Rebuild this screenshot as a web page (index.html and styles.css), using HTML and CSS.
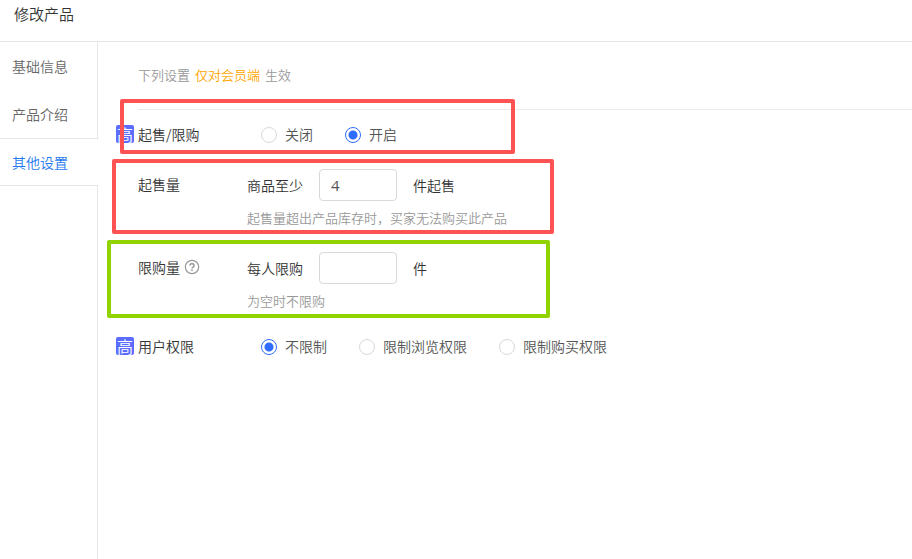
FILE: index.html
```html
<!DOCTYPE html>
<html lang="zh-CN">
<head>
    <meta charset="UTF-8">
    <meta name="viewport" content="width=device-width, initial-scale=1.0">
    <title>修改产品</title>
    <link rel="stylesheet" href="styles.css">
</head>
<body>
    <header class="page-header">
        <h1>修改产品</h1>
    </header>

    <div class="layout">
        <nav class="side-nav">
            <a href="#base">基础信息</a>
            <a href="#intro">产品介绍</a>
            <a href="#other" class="active">其他设置</a>
            <div class="side-rest"></div>
        </nav>

        <main class="content">
            <p class="tip">
                <span>下列设置</span>
                <strong>仅对会员端</strong>
                <span>生效</span>
            </p>

            <form class="settings">
                <div class="row radio-row" role="radiogroup" aria-labelledby="limitLabel">
                    <span class="badge">高</span>
                    <span class="label" id="limitLabel">起售/限购</span>
                    <div class="radios">
                        <label><input type="radio" name="limit" value="0">关闭</label>
                        <label><input type="radio" name="limit" value="1" checked>开启</label>
                    </div>
                    <div class="mark mark-switch"></div>
                </div>

                <div class="row field-row">
                    <label class="label" for="minCount">起售量</label>
                    <div class="field">
                        <div class="field-line">
                            <span>商品至少</span>
                            <input type="text" id="minCount" value="4">
                            <span>件起售</span>
                        </div>
                        <p class="hint">起售量超出产品库存时，买家无法购买此产品</p>
                    </div>
                    <div class="mark mark-min"></div>
                </div>

                <div class="row field-row">
                    <div class="label">
                        <label for="maxCount">限购量</label>
                        <button type="button" class="help" aria-label="限购量说明">
                            <svg width="16" height="16" viewBox="0 0 16 16" fill="none" stroke="#999">
                                <circle cx="8" cy="8" r="6.7" stroke-width="1.2"/>
                                <path d="M6 6.6a2 1.9 0 1 1 3.1 1.5C8.4 8.6 8 8.9 8 9.6" stroke-width="1.6"/>
                                <path d="M8 10.4v1.6" stroke-width="1.7"/>
                            </svg>
                        </button>
                    </div>
                    <div class="field">
                        <div class="field-line">
                            <span>每人限购</span>
                            <input type="text" id="maxCount" value="">
                            <span>件</span>
                        </div>
                        <p class="hint">为空时不限购</p>
                    </div>
                    <div class="mark mark-max"></div>
                </div>

                <div class="row radio-row" role="radiogroup" aria-labelledby="authLabel">
                    <span class="badge">高</span>
                    <span class="label" id="authLabel">用户权限</span>
                    <div class="radios">
                        <label><input type="radio" name="auth" value="0" checked>不限制</label>
                        <label><input type="radio" name="auth" value="1">限制浏览权限</label>
                        <label><input type="radio" name="auth" value="2">限制购买权限</label>
                    </div>
                </div>
            </form>
        </main>
    </div>
</body>
</html>
```
FILE: styles.css
```css
* {
    box-sizing: border-box;
}
body {
    margin: 0;
    min-height: 100vh;
    display: flex;
    flex-direction: column;
    background: #fff;
    color: #333;
    font-family: "Noto Sans CJK SC", sans-serif;
    font-size: 14px;
    font-weight: 350;
    line-height: 20px;
}
h1, p {
    margin: 0;
    font-weight: inherit;
}
input, button {
    font-family: inherit;
}
.page-header {
    padding: 4px 14px 17px;
    border-bottom: 1px solid #e6e6e6;
}
.page-header h1 {
    font-size: 15px;
    line-height: 20px;
}
.layout {
    flex: 1;
    display: flex;
}

/* left menu */
.side-nav {
    flex: 0 0 98px;
    display: flex;
    flex-direction: column;
}
.side-nav a {
    padding: 14px 12px;
    border-right: 1px solid #e6e6e6;
    color: #666;
    text-decoration: none;
}
.side-nav a.active {
    padding: 13px 12px;
    border-top: 1px solid #e6e6e6;
    border-bottom: 1px solid #e6e6e6;
    border-right: 0;
    color: #1f78f0;
}
.side-rest {
    flex: 1;
    border-right: 1px solid #e6e6e6;
}

.content {
    flex: 1;
    padding-left: 40px;
}
.tip {
    display: flex;
    gap: 5px;
    padding: 23px 0 24px;
    border-bottom: 1px solid #ebebeb;
    color: #999;
    font-size: 13px;
}
.tip strong {
    color: #ffa500;
    font-weight: inherit;
}

/* form rows */
.settings {
    display: flex;
    flex-direction: column;
    gap: 24px;
    padding-top: 13px;
}
.row {
    position: relative;
    display: flex;
    align-items: center;
}
.radio-row {
    margin: 1px 0;
}
.badge {
    width: 18px;
    height: 18px;
    margin-left: -22px;
    margin-right: 4px;
    border-radius: 2px;
    background: #5b6cff;
    color: #fff;
    font-size: 16px;
    line-height: 18px;
    text-align: center;
}
.label {
    display: flex;
    align-items: center;
    gap: 4px;
    flex: 0 0 109px;
}
.radios {
    display: flex;
    gap: 32px;
    padding-left: 14px;
}
.radios label {
    display: flex;
    align-items: center;
    gap: 8px;
    color: #555;
}
.radios input {
    appearance: none;
    width: 16px;
    height: 16px;
    margin: 2px 0 0;
    border: 1px solid #d9d9d9;
    border-radius: 50%;
}
.radios input:checked {
    border-color: #2e6dff;
    background: radial-gradient(circle, #2e6dff 4px, #fff 5px);
}
.field-row {
    align-items: flex-start;
}
.field-row .label {
    height: 30px;
}
.field-line {
    display: flex;
    align-items: center;
    gap: 16px;
}
.field-line input {
    width: 78px;
    height: 32px;
    padding: 0 11px;
    border: 1px solid #d9d9d9;
    border-radius: 4px;
    color: #555;
    font-family: "Open Sans", sans-serif;
    font-size: 15px;
}
.hint {
    margin-top: 7px;
    color: #999;
    font-size: 13px;
}
.help {
    display: flex;
    padding: 0;
    border: 0;
    background: none;
    cursor: pointer;
}

/* highlight frames drawn over the form */
.mark {
    position: absolute;
    border: 4px solid #ff5252;
    border-radius: 2px;
    pointer-events: none;
}
.mark-switch {
    top: -25px;
    left: -18px;
    width: 395px;
    height: 55px;
}
.mark-min {
    top: -10px;
    left: -26px;
    width: 442px;
    height: 75px;
}
.mark-max {
    top: -12px;
    left: -31px;
    width: 443px;
    height: 78px;
    border-color: #91d300;
}
```
